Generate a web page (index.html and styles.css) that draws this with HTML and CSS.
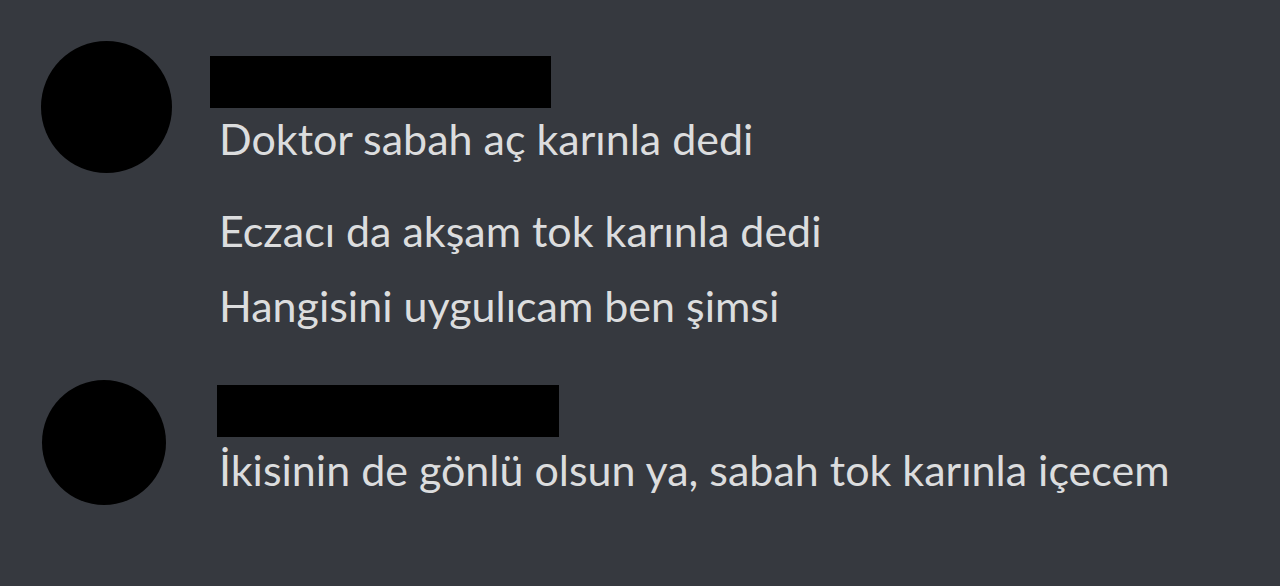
FILE: index.html
```html
<!DOCTYPE html>
<html lang="tr">
<head>
  <meta charset="UTF-8" />
  <meta name="viewport" content="width=device-width, initial-scale=1.0"/>
  <title>Sohbet</title>
  <link rel="stylesheet" href="styles.css">
</head>
<body>
  <div class="chat">
    <div class="message first">
      <div class="avatar"></div>
      <div class="content">
        <div class="username"></div>
        <div class="line">Doktor sabah aç karınla dedi</div>
        <div class="line gap">Eczacı da akşam tok karınla dedi</div>
        <div class="line">Hangisini uygulıcam ben şimsi</div>
      </div>
    </div>
    <div class="message second">
      <div class="avatar"></div>
      <div class="content">
        <div class="username"></div>
        <div class="line">İkisinin de gönlü olsun ya, sabah tok karınla içecem</div>
      </div>
    </div>
  </div>
</body>
</html>
```

FILE: styles.css
```css
html, body {
  margin: 0;
  padding: 0;
  height: 100vh;
  background: #36393f;
  font-family: Lato, "Open Sans", sans-serif;
  overflow: hidden;
}
.chat {
  display: flex;
  flex-direction: column;
}
.message {
  display: flex;
  align-items: flex-start;
}
.message.first {
  padding: 41px 0 0 41px;
}
.message.second {
  padding: 37px 0 0 42px;
}
.avatar {
  background: #000;
  border-radius: 50%;
  flex-shrink: 0;
}
.first .avatar {
  width: 131px;
  height: 132px;
  margin-right: 38px;
}
.second .avatar {
  width: 124px;
  height: 125px;
  margin-right: 51px;
}
.username {
  background: #000;
  height: 52px;
}
.first .username {
  width: 341px;
  margin: 15px 0 -7px;
}
.second .username {
  width: 342px;
  margin: 5px 0 -5px;
}
.line {
  color: #dcddde;
  font-size: 43px;
  line-height: 75px;
  white-space: nowrap;
}
.first .line {
  margin-left: 9px;
}
.second .line {
  margin-left: 2px;
}
.line.gap {
  margin-top: 17px;
}
```
